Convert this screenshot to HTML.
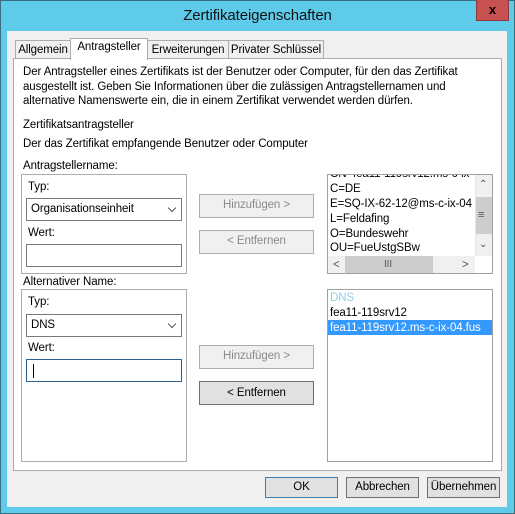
<!DOCTYPE html>
<html><head><meta charset="utf-8"><style>
*{box-sizing:border-box;margin:0;padding:0}
body{width:515px;height:514px;background:#5fcbea;position:relative;overflow:hidden;font-family:"Liberation Sans",sans-serif;font-size:11.5px;letter-spacing:-0.1px;color:#000}
.a{position:absolute}
.t{position:absolute;white-space:nowrap;line-height:14px}
.box{position:absolute;border:1px solid #a0a0a0;background:#fff}
.grp{position:absolute;border:1px solid #adadad}
.btn{position:absolute;border:1px solid #adadad;background:#f0f0f0;color:#8a8a8a;text-align:center;line-height:21px;white-space:nowrap}
.btn2{position:absolute;border:1px solid #707070;background:#e1e1e1;text-align:center;line-height:19px;white-space:nowrap}
.tab{position:absolute;border:1px solid #acacac;border-bottom:none;background:#f0f0f0;text-align:center;line-height:18px;white-space:nowrap;font-size:11.5px}
.combo{position:absolute;border:1px solid #7a7a7a;background:#fff;padding-left:4px;line-height:20px}
.combo:after{content:"";position:absolute;right:6px;top:6px;width:5px;height:5px;border-right:1.5px solid #555;border-bottom:1.5px solid #555;transform:rotate(45deg)}
</style></head><body>
<div class="a" style="left:0;top:0;width:515px;height:514px;border:1px solid #3c6e82"></div>
<div class="t" style="left:0;width:515px;text-align:center;top:7px;font-size:15px;line-height:18px;color:#111">Zertifikateigenschaften</div>
<div class="a" style="left:476px;top:0;width:33px;height:21px;background:#c75050;border:1px solid #8a3a3a;border-top:none;color:#000;font-weight:bold;text-align:center;line-height:19px;font-size:13px">x</div>
<div class="a" style="left:7px;top:31px;width:500px;height:476px;background:#f0f0f0"></div>
<div class="tab" style="left:15px;top:40px;width:56px;height:19px">Allgemein</div>
<div class="tab" style="left:147px;top:40px;width:82px;height:19px">Erweiterungen</div>
<div class="tab" style="left:228px;top:40px;width:96px;height:19px">Privater Schlüssel</div>
<div class="a" style="left:13px;top:58px;width:489px;height:413px;background:#fff;border:1px solid #acacac"></div>
<div class="tab" style="left:70px;top:38px;width:78px;height:22px;background:#fff;line-height:17px">Antragsteller</div>
<div class="t" style="left:23px;top:65px">Der Antragsteller eines Zertifikats ist der Benutzer oder Computer, für den das Zertifikat</div>
<div class="t" style="left:23px;top:80px">ausgestellt ist. Geben Sie Informationen über die zulässigen Antragstellernamen und</div>
<div class="t" style="left:23px;top:94px">alternative Namenswerte ein, die in einem Zertifikat verwendet werden dürfen.</div>
<div class="t" style="left:23px;top:118px">Zertifikatsantragsteller</div>
<div class="t" style="left:23px;top:137px">Der das Zertifikat empfangende Benutzer oder Computer</div>
<div class="t" style="left:23px;top:159px">Antragstellername:</div>
<div class="grp" style="left:21px;top:174px;width:166px;height:100px"></div>
<div class="t" style="left:28px;top:180px">Typ:</div>
<div class="combo" style="left:26px;top:198px;width:156px;height:23px">Organisationseinheit</div>
<div class="t" style="left:28px;top:226px">Wert:</div>
<div class="a" style="left:26px;top:244px;width:156px;height:23px;border:1px solid #7a7a7a;background:#fff"></div>
<div class="btn" style="left:199px;top:194px;width:115px;height:24px">Hinzufügen &gt;</div>
<div class="btn" style="left:199px;top:230px;width:115px;height:24px">&lt; Entfernen</div>
<div class="box" style="left:327px;top:174px;width:166px;height:100px;overflow:hidden">
<div class="t" style="left:2px;top:-8px">CN=fea11-119srv12.ms-c-ix</div>
<div class="t" style="left:2px;top:7px">C=DE</div>
<div class="t" style="left:2px;top:22px">E=SQ-IX-62-12@ms-c-ix-04</div>
<div class="t" style="left:2px;top:37px">L=Feldafing</div>
<div class="t" style="left:2px;top:52px">O=Bundeswehr</div>
<div class="t" style="left:2px;top:66px">OU=FueUstgSBw</div>
<div class="a" style="left:147px;top:0;width:17px;height:81px;background:#f0f0f0;border-left:1px solid #e6e6e6"></div>
<div class="a" style="left:148px;top:22px;width:16px;height:37px;background:#cdcdcd"></div>
<div class="t" style="left:151px;top:3px;color:#555;font-size:10px">⌃</div>
<div class="t" style="left:150px;top:33px;color:#555;font-size:11px">≡</div>
<div class="t" style="left:151px;top:63px;color:#555;font-size:10px">⌄</div>
<div class="a" style="left:0;top:81px;width:147px;height:17px;background:#f0f0f0"></div>
<div class="a" style="left:17px;top:81px;width:88px;height:17px;background:#cdcdcd"></div>
<div class="t" style="left:5px;top:83px;color:#555">&lt;</div>
<div class="t" style="left:56px;top:83px;color:#555;font-size:10px">III</div>
<div class="t" style="left:134px;top:83px;color:#555">&gt;</div>
</div>
<div class="t" style="left:23px;top:275px">Alternativer Name:</div>
<div class="grp" style="left:21px;top:289px;width:166px;height:173px"></div>
<div class="t" style="left:28px;top:295px">Typ:</div>
<div class="combo" style="left:26px;top:314px;width:156px;height:23px">DNS</div>
<div class="t" style="left:28px;top:341px">Wert:</div>
<div class="a" style="left:26px;top:359px;width:156px;height:23px;border:1px solid #2b5f8c;background:#fff"><div class="a" style="left:6px;top:4px;width:1px;height:14px;background:#000"></div></div>
<div class="btn" style="left:199px;top:345px;width:115px;height:24px">Hinzufügen &gt;</div>
<div class="btn2" style="left:199px;top:381px;width:115px;height:24px;line-height:22px">&lt; Entfernen</div>
<div class="box" style="left:327px;top:289px;width:166px;height:173px;overflow:hidden">
<div class="t" style="left:2px;top:1px;color:#8fd0ee">DNS</div>
<div class="t" style="left:2px;top:16px">fea11-119srv12</div>
<div class="a" style="left:0;top:30px;width:164px;height:15px;background:#3399ff"></div>
<div class="t" style="left:2px;top:31px;color:#fff">fea11-119srv12.ms-c-ix-04.fus</div>
</div>
<div class="btn2" style="left:265px;top:477px;width:73px;height:21px;border-color:#3c7fb1">OK</div>
<div class="btn2" style="left:346px;top:477px;width:73px;height:21px">Abbrechen</div>
<div class="btn2" style="left:427px;top:477px;width:73px;height:21px">Übernehmen</div>
</body></html>
